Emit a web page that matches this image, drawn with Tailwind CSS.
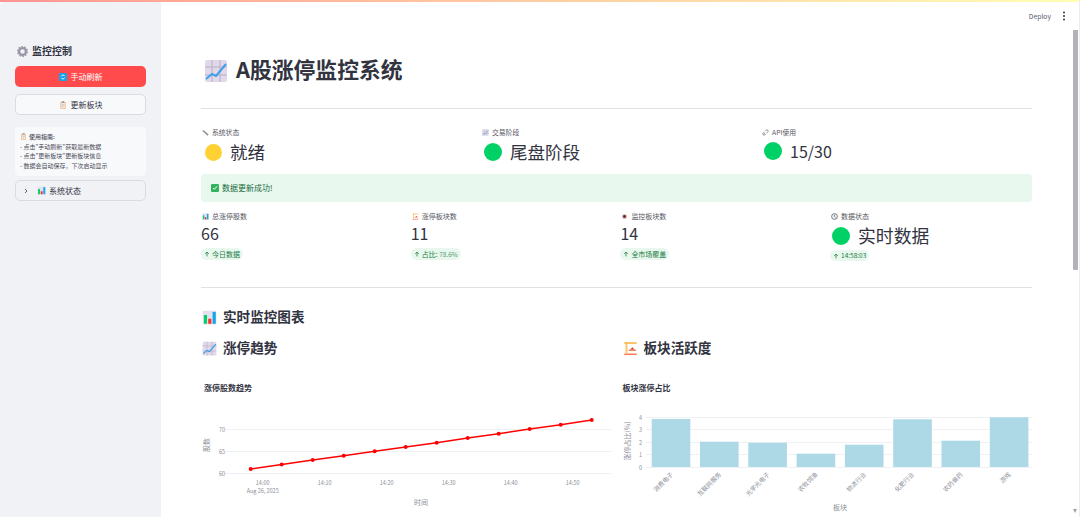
<!DOCTYPE html>
<html lang="zh">
<head>
<meta charset="UTF-8" />
<title>A股涨停监控系统</title>
<script src="https://cdn.jsdelivr.net/npm/@tailwindcss/browser@4"></script>
</head>
<body class="w-[1080px] h-[517px] overflow-hidden bg-white text-[#31333f] font-['Noto_Sans_CJK_SC','Noto_Sans',sans-serif] relative">
  <svg width="0" height="0" class="absolute">
    <defs>
      <symbol id="trend" viewBox="0 0 24 24">
        <rect x="1" y="1" width="22" height="22" rx="2" fill="#e1d9ea"/>
        <path d="M8 1v22M16 1v22M1 8h22M1 16h22" stroke="#b9aec8" stroke-width="1"/>
        <path d="M2 20l6-5 4 2 10-12" fill="none" stroke="#3f9fe8" stroke-width="2"/>
      </symbol>
      <symbol id="bars" viewBox="0 0 24 24">
        <rect x="1" y="1" width="22" height="22" rx="2" fill="#e6dfee"/>
        <rect x="3" y="8" width="5" height="14" fill="#00d26a"/>
        <rect x="10" y="14" width="5" height="8" fill="#f8312f"/>
        <rect x="17" y="3" width="5" height="19" fill="#0ea5e9"/>
      </symbol>
      <symbol id="crane" viewBox="0 0 24 24">
        <rect x="2" y="20" width="20" height="2.5" fill="#ff7a59"/>
        <rect x="4" y="2" width="3" height="18" fill="#ffc46b"/>
        <rect x="2" y="2" width="20" height="2.5" fill="#ffb347"/>
        <path d="M11 14l4-4 4 4z" fill="#d8443c"/>
        <rect x="9" y="14" width="12" height="2" fill="#e98a5a"/>
      </symbol>
      <symbol id="clip" viewBox="0 0 24 24">
        <rect x="4" y="3" width="16" height="20" rx="2" fill="#f4b67a"/>
        <rect x="6.5" y="5.5" width="11" height="15" fill="#eef0f4"/>
        <rect x="8" y="1" width="8" height="4" rx="1" fill="#8d8f9b"/>
        <path d="M8 10h8M8 13h8M8 16h6" stroke="#9a9ca8" stroke-width="1"/>
      </symbol>
      <symbol id="up" viewBox="0 0 10 10">
        <path d="M5 9V2M2 4.8L5 1.8l3 3" fill="none" stroke="#1a7a42" stroke-width="1.3"/>
      </symbol>
    </defs>
  </svg>

  <div class="h-[2px] opacity-60 bg-gradient-to-r from-[#ff4b4b] to-[#fffd80]"></div>

  <div class="flex h-[515px]">
    <aside class="w-[161px] shrink-0 bg-[#f0f2f6] px-[15px] pt-[41px] rounded-tl-[4px]">
      <div class="flex items-center gap-[4px] h-[16px] pl-[2px] text-[10px] font-semibold leading-none">
        <svg class="w-[11px] h-[11px]" viewBox="0 0 24 24"><circle cx="12" cy="12" r="7.5" fill="none" stroke="#9a95a6" stroke-width="5"/><circle cx="12" cy="12" r="10.5" fill="none" stroke="#9a95a6" stroke-width="3" stroke-dasharray="3.5 3"/></svg>
        <span>监控控制</span>
      </div>
      <button class="mt-[7px] w-full h-[21px] rounded-[5px] bg-[#ff4b4b] text-white text-[8px] flex items-center justify-center gap-[4px]">
        <svg class="w-[8px] h-[8px]" viewBox="0 0 24 24"><rect width="24" height="24" rx="4" fill="#16a3e8"/><path d="M7 10a5.5 5.5 0 0 1 10-1M17 14a5.5 5.5 0 0 1-10 1" fill="none" stroke="#fff" stroke-width="2.5"/></svg>
        <span>手动刷新</span>
      </button>
      <button class="mt-[7px] w-full h-[21px] rounded-[5px] bg-[#f8f9fb] border border-[#d9dbe1] text-[8px] flex items-center justify-center gap-[4px]">
        <svg class="w-[8px] h-[8px]"><use href="#clip"/></svg>
        <span>更新板块</span>
      </button>
      <div class="mt-[12px] h-[49px] rounded-[4px] bg-[#f8f9fb] px-[5px] pt-[5px] text-[6px] leading-[9.5px] text-[#4a4c58]">
        <div class="flex items-center gap-[2px]"><svg class="w-[7px] h-[7px]"><use href="#clip"/></svg><span class="font-medium">使用指南:</span></div>
        <div>- 点击"手动刷新"获取最新数据</div>
        <div>- 点击"更新板块"更新板块信息</div>
        <div>- 数据会自动保存，下次启动显示</div>
      </div>
      <div class="mt-[4px] h-[21px] rounded-[5px] border border-[#d9dbe1] flex items-center pl-[7px] text-[8px]">
        <svg class="w-[6px] h-[6px]" viewBox="0 0 24 24"><path d="M8 4l8 8-8 8" fill="none" stroke="#31333f" stroke-width="3"/></svg>
        <svg class="w-[9px] h-[9px] ml-[8px] mr-[3px]"><use href="#bars"/></svg>
        <span>系统状态</span>
      </div>
    </aside>

    <main class="flex-1 min-w-0 pl-[40px] pr-[48px] pt-[57px]">
      <h1 class="flex items-center gap-[8px] h-[24px] pl-[3px] text-[21.8px] font-bold leading-none">
        <svg class="w-[24px] h-[24px]"><use href="#trend"/></svg>
        <span class="relative top-[-2px]">A股涨停监控系统</span>
      </h1>
      <hr class="mt-[25px] border-0 h-px bg-[#dfe1e6]" />

      <div class="grid grid-cols-[repeat(3,280px)] mt-[18px] h-[47px]">
        <div>
          <div class="flex items-center gap-[3px] h-[10px] text-[6.8px] text-[#555761] pl-px">
            <svg class="w-[7px] h-[7px]" viewBox="0 0 24 24"><path d="M3 5l18 16" stroke="#8a8c94" stroke-width="5"/></svg>
            <span>系统状态</span>
          </div>
          <div class="flex items-center mt-[4px] h-[22px] text-[17.5px] leading-none pl-[4px] gap-[8px]">
            <span class="w-[17px] h-[17px] rounded-full bg-[#ffd133]"></span><span>就绪</span>
          </div>
        </div>
        <div>
          <div class="flex items-center gap-[3px] h-[10px] text-[6.8px] text-[#555761] pl-px">
            <svg class="w-[7px] h-[7px]"><use href="#trend"/></svg>
            <span>交易阶段</span>
          </div>
          <div class="flex items-center mt-[4px] h-[22px] text-[17.5px] leading-none pl-[3px] gap-[8px]">
            <span class="w-[18px] h-[18px] rounded-full bg-[#00d166]"></span><span>尾盘阶段</span>
          </div>
        </div>
        <div>
          <div class="flex items-center gap-[3px] h-[10px] text-[6.8px] text-[#555761] pl-px">
            <svg class="w-[7px] h-[7px]" viewBox="0 0 24 24"><path d="M4 20l6-6M10 8l4-4a4 4 0 0 1 6 6l-4 4M14 16l-4 4a4 4 0 0 1-6-6l4-4" fill="none" stroke="#8a8c94" stroke-width="3"/></svg>
            <span>API使用</span>
          </div>
          <div class="flex items-center mt-[3px] h-[22px] text-[16px] leading-none pl-[3px] gap-[8px]">
            <span class="w-[18px] h-[18px] rounded-full bg-[#00d166]"></span><span>15/30</span>
          </div>
        </div>
      </div>

      <div class="h-[28px] rounded-[4px] bg-[#e8f8ee] flex items-center pl-[10px] gap-[3px] text-[8px] text-[#1a6b3a]">
        <svg class="w-[8px] h-[8px]" viewBox="0 0 24 24"><rect width="24" height="24" rx="4" fill="#2fb45a"/><path d="M6 12l4 4 8-9" fill="none" stroke="#fff" stroke-width="3"/></svg>
        <span>数据更新成功!</span>
      </div>

      <div class="grid grid-cols-[repeat(4,209.7px)] mt-[9px] h-[62px]">
        <div>
          <div class="flex items-center gap-[3px] h-[10px] text-[7px] text-[#555761] pl-px"><svg class="w-[7px] h-[7px]"><use href="#bars"/></svg><span>总涨停股数</span></div>
          <div class="mt-[1px] h-[22px] text-[16px] leading-[22px]">66</div>
          <div class="flex w-fit items-center mt-[4px] h-[12px] rounded-full bg-[#e8f8ee] px-[3px] gap-[2px] text-[7px] text-[#1a7a42]"><svg class="w-[6px] h-[6px]"><use href="#up"/></svg><span>今日数据</span></div>
        </div>
        <div>
          <div class="flex items-center gap-[3px] h-[10px] text-[7px] text-[#555761] pl-px"><svg class="w-[7px] h-[7px]"><use href="#crane"/></svg><span>涨停板块数</span></div>
          <div class="mt-[1px] h-[22px] text-[16px] leading-[22px]">11</div>
          <div class="flex w-fit items-center mt-[4px] h-[12px] rounded-full bg-[#e8f8ee] px-[3px] gap-[2px] text-[7px] text-[#1a7a42]"><svg class="w-[6px] h-[6px]"><use href="#up"/></svg><span>占比: <span class="text-[6.5px] text-[#5c9a78]">78.6%</span></span></div>
        </div>
        <div>
          <div class="flex items-center gap-[3px] h-[10px] text-[7px] text-[#555761] pl-px"><svg class="w-[7px] h-[7px]" viewBox="0 0 24 24"><circle cx="12" cy="12" r="9" fill="#d9c9c9"/><circle cx="12" cy="12" r="5" fill="#7a1f1f"/></svg><span>监控板块数</span></div>
          <div class="mt-[1px] h-[22px] text-[16px] leading-[22px]">14</div>
          <div class="flex w-fit items-center mt-[4px] h-[12px] rounded-full bg-[#e8f8ee] px-[3px] gap-[2px] text-[7px] text-[#1a7a42]"><svg class="w-[6px] h-[6px]"><use href="#up"/></svg><span>全市场覆盖</span></div>
        </div>
        <div>
          <div class="flex items-center gap-[3px] h-[10px] text-[7px] text-[#555761] pl-px"><svg class="w-[7px] h-[7px]" viewBox="0 0 24 24"><circle cx="12" cy="12" r="10" fill="#eee" stroke="#6d6f78" stroke-width="3"/><path d="M12 6v6l4 3" fill="none" stroke="#6d6f78" stroke-width="2.5"/></svg><span>数据状态</span></div>
          <div class="flex items-center mt-[4px] h-[22px] text-[17.8px] leading-none pl-[2px] gap-[8px]"><span class="w-[18px] h-[18px] rounded-full bg-[#00d166]"></span><span>实时数据</span></div>
          <div class="flex w-fit items-center mt-[3px] h-[11px] rounded-full bg-[#e8f8ee] px-[3px] gap-[2px] text-[6.5px] text-[#1a7a42]"><svg class="w-[6px] h-[6px]"><use href="#up"/></svg><span>14:58:03</span></div>
        </div>
      </div>

      <hr class="mt-[14px] border-0 h-px bg-[#dfe1e6]" />

      <h3 class="mt-[20px] flex items-center gap-[6px] h-[18px] pl-px text-[13.6px] font-semibold leading-none">
        <svg class="w-[15px] h-[15px]"><use href="#bars"/></svg><span>实时监控图表</span>
      </h3>

      <div class="grid grid-cols-2 gap-[10px] mt-[13px]">
        <div>
          <h3 class="flex items-center gap-[6px] h-[18px] pl-px text-[13.6px] font-semibold leading-none">
            <svg class="w-[15px] h-[15px]"><use href="#trend"/></svg><span>涨停趋势</span>
          </h3>
          <div class="mt-[25px] pl-[3px] h-[12px] text-[8px] font-bold leading-[12px]">涨停股数趋势</div>
          <svg class="block mt-[8px]" width="410" height="115" viewBox="201 402 410 115" font-family="Noto Sans CJK SC" fill="#8d8f99">
            <path d="M225 429.5H611M225 451.5H611M225 473.5H611" stroke="#f0f1f4" stroke-width="1"/>
            <g font-size="5.5" text-anchor="end">
              <text x="225" y="431.5">70</text><text x="225" y="453.5">65</text><text x="225" y="475.5">60</text>
            </g>
            <g font-size="5.5" text-anchor="middle">
              <text x="262.7" y="485">14:00</text><text x="262.7" y="493">Aug 26, 2025</text>
              <text x="324.7" y="485">14:10</text><text x="386.7" y="485">14:20</text><text x="448.7" y="485">14:30</text><text x="510.7" y="485">14:40</text><text x="572.7" y="485">14:50</text>
            </g>
            <text x="421" y="505" font-size="7" text-anchor="middle">时间</text>
            <text transform="translate(209 445) rotate(-90)" font-size="7" text-anchor="middle">股数</text>
            <polyline points="250.7,469 281.7,464.5 312.7,460 343.7,455.7 374.7,451.3 405.7,447 436.7,442.7 467.7,438 498.7,433.7 529.7,429 560.7,424.7 591.7,420" fill="none" stroke="#ff0000" stroke-width="1.5"/>
            <g fill="#ff0000">
              <circle cx="250.7" cy="469" r="2"/><circle cx="281.7" cy="464.5" r="2"/><circle cx="312.7" cy="460" r="2"/><circle cx="343.7" cy="455.7" r="2"/><circle cx="374.7" cy="451.3" r="2"/><circle cx="405.7" cy="447" r="2"/><circle cx="436.7" cy="442.7" r="2"/><circle cx="467.7" cy="438" r="2"/><circle cx="498.7" cy="433.7" r="2"/><circle cx="529.7" cy="429" r="2"/><circle cx="560.7" cy="424.7" r="2"/><circle cx="591.7" cy="420" r="2"/>
            </g>
          </svg>
        </div>
        <div>
          <h3 class="flex items-center gap-[6px] h-[18px] pl-px text-[13.6px] font-semibold leading-none">
            <svg class="w-[15px] h-[15px]"><use href="#crane"/></svg><span>板块活跃度</span>
          </h3>
          <div class="mt-[25px] pl-px h-[12px] text-[8px] font-bold leading-[12px]">板块涨停占比</div>
          <svg class="block mt-[8px] overflow-visible" width="410" height="115" viewBox="621 402 410 115" font-family="Noto Sans CJK SC" fill="#8d8f99">
            <path d="M645 417.5H1031M645 429.5H1031M645 442.5H1031M645 454.5H1031M645 467.5H1031" stroke="#eff1f5" stroke-width="1"/>
            <g font-size="5.5" text-anchor="end">
              <text x="641" y="419.5">4</text><text x="641" y="431.5">3</text><text x="641" y="444.5">2</text><text x="641" y="456.5">1</text><text x="641" y="469.5">0</text>
            </g>
            <text transform="translate(629 441) rotate(-90)" font-size="7" text-anchor="middle">涨停占比(%)</text>
            <g fill="#add8e6">
              <rect x="650.7" y="419" width="38.6" height="48"/>
              <rect x="699" y="441.7" width="38.6" height="25.3"/>
              <rect x="747.3" y="442.7" width="38.6" height="24.3"/>
              <rect x="795.6" y="453.7" width="38.6" height="13.3"/>
              <rect x="843.9" y="444.7" width="38.6" height="22.3"/>
              <rect x="892.2" y="419.3" width="38.6" height="47.7"/>
              <rect x="940.5" y="440.7" width="38.6" height="26.3"/>
              <rect x="988.8" y="417.3" width="38.6" height="49.7"/>
            </g>
            <g font-size="6.1" text-anchor="end">
              <text transform="translate(672.5 475) rotate(-45)">消费电子</text>
              <text transform="translate(720.5 475) rotate(-45)">互联网服务</text>
              <text transform="translate(769 475) rotate(-45)">光学光电子</text>
              <text transform="translate(817 475) rotate(-45)">农牧饲渔</text>
              <text transform="translate(865.5 475) rotate(-45)">物流行业</text>
              <text transform="translate(913.5 475) rotate(-45)">化肥行业</text>
              <text transform="translate(962 475) rotate(-45)">农药兽药</text>
              <text transform="translate(1010 475) rotate(-45)">游戏</text>
            </g>
            <text x="839" y="510" font-size="7" text-anchor="middle">板块</text>
          </svg>
        </div>
      </div>
    </main>
  </div>

  <div class="absolute top-[11px] right-[13.5px] flex items-center gap-[9.5px] text-[6.8px] text-[#5c5a70]">
    <span>Deploy</span>
    <svg class="w-[6px] h-[10px]" viewBox="0 0 6 10" fill="#31333f"><circle cx="3" cy="1.5" r="1"/><circle cx="3" cy="5" r="1"/><circle cx="3" cy="8.5" r="1"/></svg>
  </div>
  <div class="absolute top-[30px] h-[240px] right-[2.5px] w-[4.4px] rounded-b-[1px] bg-[#b2b2b8]"></div>
  <div class="absolute top-0 bottom-0 right-0 w-px bg-[#ececef]"></div>
  <svg class="absolute top-[509px] right-[3px] w-[4px] h-[4px]" viewBox="0 0 4 4" fill="#a0a0a6"><path d="M0 0h4L2 4z"/></svg>
</body>
</html>
